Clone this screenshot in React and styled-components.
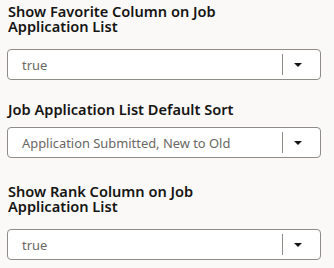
import React from "react";
import styled, { createGlobalStyle } from "styled-components";

const GlobalStyle = createGlobalStyle`
  html, body {
    margin: 0;
    padding: 0;
    background: #faf9f8;
  }
  body {
    font-family: "Noto Sans", "Open Sans", sans-serif;
  }
`;

const Page = styled.div`
  display: flex;
  flex-direction: column;
  padding: 4px 13px 0 7px;
`;

const Field = styled.div`
  display: flex;
  flex-direction: column;
  margin-top: ${props => props.$top || "0px"};
`;

const Label = styled.label`
  font-size: 14.6px;
  line-height: 15px;
  font-weight: 600;
  color: #161513;
  padding-left: 1px;
  margin-bottom: ${props => props.$gap || "15px"};
  max-width: 250px;
`;

const Select = styled.div`
  display: flex;
  align-items: center;
  height: 31px;
  box-sizing: border-box;
  background: #ffffff;
  border: 1px solid #8f8c88;
  border-radius: 4px;
`;

const Value = styled.span`
  flex: 1;
  padding-left: 14px;
  font-size: 12.9px;
  color: #6a6764;
  white-space: nowrap;
`;

const Divider = styled.span`
  align-self: stretch;
  width: 1px;
  margin: 4px 0;
  background: #8f8c88;
`;

const CaretBox = styled.span`
  display: flex;
  align-items: center;
  justify-content: center;
  width: 30px;
  padding-right: 7px;
`;

const Caret = () => (
  <svg width="8" height="4" viewBox="0 0 8 4">
    <path d="M0 0 L8 0 L4 4 Z" fill="#161513" />
  </svg>
);

const Dropdown = ({ value }) => (
  <Select>
    <Value>{value}</Value>
    <Divider />
    <CaretBox>
      <Caret />
    </CaretBox>
  </Select>
);

export default function App() {
  return (
    <>
      <GlobalStyle />
      <Page>
        <Field>
          <Label>Show Favorite Column on Job Application List</Label>
          <Dropdown value="true" />
        </Field>
        <Field $top="22px">
          <Label $gap="10px">Job Application List Default Sort</Label>
          <Dropdown value="Application Submitted, New to Old" />
        </Field>
        <Field $top="26px">
          <Label>Show Rank Column on Job Application List</Label>
          <Dropdown value="true" />
        </Field>
      </Page>
    </>
  );
}
